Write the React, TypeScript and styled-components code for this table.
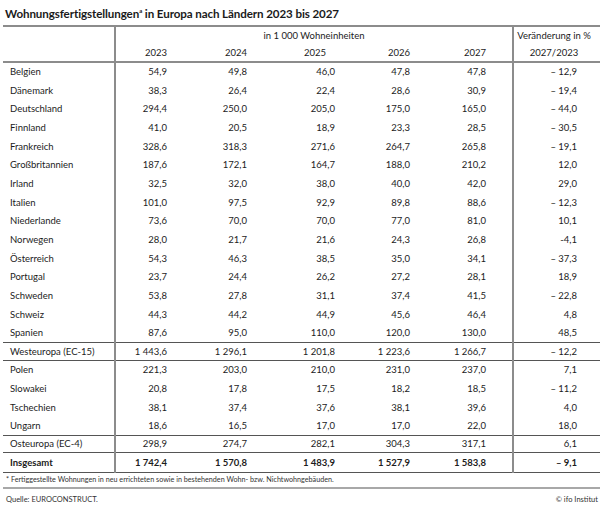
import React from 'react';
import styled, { createGlobalStyle } from 'styled-components';

const GlobalStyle = createGlobalStyle`
  html, body {
    margin: 0;
    padding: 0;
    background: #fff;
  }
  body {
    font-family: Lato, "Liberation Sans", sans-serif;
    color: #1c1c1c;
  }
`;

const Page = styled.div`
  width: 605px;
  height: 510px;
  padding: 7px 5px 0 3px;
  box-sizing: border-box;
`;

const Title = styled.h1`
  margin: 0 0 0 2px;
  height: 18px;
  font-size: 11.6px;
  font-weight: 700;
  letter-spacing: -0.1px;
  color: #1a1a1a;

  sup {
    font-size: 6px;
    vertical-align: 5px;
    line-height: 0;
  }
`;

const Table = styled.table`
  width: 597px;
  border-collapse: collapse;
  table-layout: fixed;
  font-size: 9.5px;
  border-top: 2px solid #8c8c8c;
  border-bottom: 1px solid #555;
`;

const Row = styled.tr<{ $line?: boolean; $bold?: boolean; $h?: number }>`
  height: ${(p) => p.$h ?? 18.7}px;
  font-weight: ${(p) => (p.$bold ? 700 : 400)};
  border-top: ${(p) => (p.$line ? '1px solid #555' : 'none')};
`;

const HeadRow = styled.tr<{ $last?: boolean }>`
  height: 18px;
  border-bottom: ${(p) => (p.$last ? '2px solid #8c8c8c' : 'none')};
`;

const Label = styled.td`
  padding: 0 0 0 7px;
  border-right: 2px solid #8c8c8c;
  white-space: nowrap;
`;

const Num = styled.td<{ $pr?: number }>`
  padding: 0 ${(p) => p.$pr ?? 26}px 0 0;
  text-align: right;
  white-space: nowrap;
`;

const Change = styled.td`
  padding: 0 23px 0 0;
  text-align: right;
  border-left: 2px solid #8c8c8c;
  white-space: nowrap;
`;

const HeadCell = styled.th<{ $align?: string; $pr?: number }>`
  font-weight: 400;
  padding: 0 ${(p) => p.$pr ?? 0}px 0 0;
  text-align: ${(p) => p.$align ?? 'right'};
  white-space: nowrap;
`;

const HeadSide = styled.th`
  font-weight: 400;
  text-align: center;
  padding: 0 6px 0 0;
  border-left: 2px solid #8c8c8c;
  white-space: nowrap;
`;

const HeadLabel = styled.th`
  border-right: 2px solid #8c8c8c;
`;

const Footnote = styled.div`
  width: 597px;
  height: 16px;
  border-bottom: 2px solid #a8a8a8;
  font-size: 7.2px;
  padding: 2px 0 0 3px;
  box-sizing: border-box;
  color: #333;
`;

const Source = styled.div`
  width: 597px;
  display: flex;
  justify-content: space-between;
  font-size: 7.5px;
  padding: 6px 2px 0 3px;
  box-sizing: border-box;
  color: #333;
`;

type Line = { name: string; v: string[]; c: string };

const west: Line[] = [
  { name: 'Belgien', v: ['54,9', '49,8', '46,0', '47,8', '47,8'], c: '– 12,9' },
  { name: 'Dänemark', v: ['38,3', '26,4', '22,4', '28,6', '30,9'], c: '– 19,4' },
  { name: 'Deutschland', v: ['294,4', '250,0', '205,0', '175,0', '165,0'], c: '– 44,0' },
  { name: 'Finnland', v: ['41,0', '20,5', '18,9', '23,3', '28,5'], c: '– 30,5' },
  { name: 'Frankreich', v: ['328,6', '318,3', '271,6', '264,7', '265,8'], c: '– 19,1' },
  { name: 'Großbritannien', v: ['187,6', '172,1', '164,7', '188,0', '210,2'], c: '12,0' },
  { name: 'Irland', v: ['32,5', '32,0', '38,0', '40,0', '42,0'], c: '29,0' },
  { name: 'Italien', v: ['101,0', '97,5', '92,9', '89,8', '88,6'], c: '– 12,3' },
  { name: 'Niederlande', v: ['73,6', '70,0', '70,0', '77,0', '81,0'], c: '10,1' },
  { name: 'Norwegen', v: ['28,0', '21,7', '21,6', '24,3', '26,8'], c: '-4,1' },
  { name: 'Österreich', v: ['54,3', '46,3', '38,5', '35,0', '34,1'], c: '– 37,3' },
  { name: 'Portugal', v: ['23,7', '24,4', '26,2', '27,2', '28,1'], c: '18,9' },
  { name: 'Schweden', v: ['53,8', '27,8', '31,1', '37,4', '41,5'], c: '– 22,8' },
  { name: 'Schweiz', v: ['44,3', '44,2', '44,9', '45,6', '46,4'], c: '4,8' },
  { name: 'Spanien', v: ['87,6', '95,0', '110,0', '120,0', '130,0'], c: '48,5' },
];

const east: Line[] = [
  { name: 'Polen', v: ['221,3', '203,0', '210,0', '231,0', '237,0'], c: '7,1' },
  { name: 'Slowakei', v: ['20,8', '17,8', '17,5', '18,2', '18,5'], c: '– 11,2' },
  { name: 'Tschechien', v: ['38,1', '37,4', '37,6', '38,1', '39,6'], c: '4,0' },
  { name: 'Ungarn', v: ['18,6', '16,5', '17,0', '17,0', '22,0'], c: '18,0' },
];

const westSum: Line = { name: 'Westeuropa (EC-15)', v: ['1 443,6', '1 296,1', '1 201,8', '1 223,6', '1 266,7'], c: '– 12,2' };
const eastSum: Line = { name: 'Osteuropa (EC-4)', v: ['298,9', '274,7', '282,1', '304,3', '317,1'], c: '6,1' };
const total: Line = { name: 'Insgesamt', v: ['1 742,4', '1 570,8', '1 483,9', '1 527,9', '1 583,8'], c: '– 9,1' };

const widths = [112, 78, 80, 88, 75, 77, 87];
const years = ['2023', '2024', '2025', '2026', '2027'];
const yearPad = [26, 26, 35, 26, 26];

const DataRow = ({ d, line, bold, h }: { d: Line; line?: boolean; bold?: boolean; h?: number }) => (
  <Row $line={line} $bold={bold} $h={h}>
    <Label>{d.name}</Label>
    {d.v.map((x, i) => (
      <Num key={i}>{x}</Num>
    ))}
    <Change>{d.c}</Change>
  </Row>
);

export default function App() {
  return (
    <Page>
      <GlobalStyle />
      <Title>
        Wohnungsfertigstellungen<sup>a</sup> in Europa nach Ländern 2023 bis 2027
      </Title>
      <Table>
        <colgroup>
          {widths.map((w, i) => (
            <col key={i} style={{ width: w }} />
          ))}
        </colgroup>
        <thead>
          <HeadRow>
            <HeadLabel rowSpan={2} />
            <HeadCell colSpan={5} $align="center">
              in 1 000 Wohneinheiten
            </HeadCell>
            <HeadSide>Veränderung in %</HeadSide>
          </HeadRow>
          <HeadRow $last>
            {years.map((y, i) => (
              <HeadCell key={y} $pr={yearPad[i]}>
                {y}
              </HeadCell>
            ))}
            <HeadSide>2027/2023</HeadSide>
          </HeadRow>
        </thead>
        <tbody>
          {west.map((d) => (
            <DataRow key={d.name} d={d} />
          ))}
          <DataRow d={westSum} line h={18} />
          {east.map((d, i) => (
            <DataRow key={d.name} d={d} line={i === 0} />
          ))}
          <DataRow d={eastSum} line h={17} />
          <DataRow d={total} line bold h={20} />
        </tbody>
      </Table>
      <Footnote>* Fertiggestellte Wohnungen in neu errichteten sowie in bestehenden Wohn- bzw. Nichtwohngebäuden.</Footnote>
      <Source>
        <span>Quelle: EUROCONSTRUCT.</span>
        <span>© ifo Institut</span>
      </Source>
    </Page>
  );
}
